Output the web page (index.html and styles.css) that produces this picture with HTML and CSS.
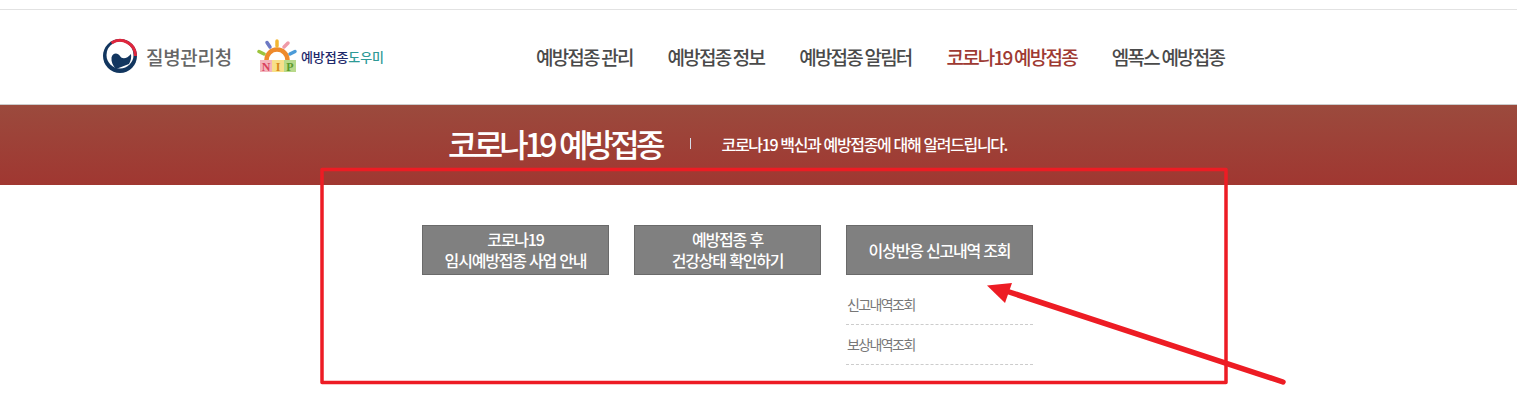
FILE: index.html
```html
<!DOCTYPE html>
<html lang="ko">

<head>
    <meta charset="UTF-8">
    <meta name="viewport" content="width=device-width, initial-scale=1.0">
    <title>코로나19 예방접종</title>
    <link rel="stylesheet" href="styles.css">
</head>

<body>
    <div class="top-line"></div>

    <header class="header">
        <div class="logos">
            <a class="logo-kdca" href="#">
                <svg class="emblem" viewBox="0 0 36 36" width="36" height="36">
                    <circle cx="18" cy="18" r="17" fill="#12365f"/>
                    <circle cx="18" cy="17" r="13.500" fill="#fff"/>
                    <path class="emblem-red" d="M9.500 5 A15.500 15.500 0 0 1 33.500 18"/>
                    <path d="M9.500 19.500 C10.500 14.500 16 14.500 18 18 C20 21.500 25 21 29 16 C29.500 19 29 23 27 26 L14 31 C11 28 9 24 9.500 19.500 Z" fill="#12365f"/>
                </svg>
                <span class="kdca-name">질병관리청</span>
            </a>
            <a class="logo-nip" href="#">
                <svg class="nip-mark" viewBox="0 0 42 34" width="42" height="34">
                    <path class="nip-arch" d="M9.500 21 A10.500 10.500 0 0 1 30.500 21"/>
                    <path class="nip-ray" d="M20 2 L20 7" stroke="#f2b632"/>
                    <path class="nip-ray" d="M10 3.500 L13 8" stroke="#6d79c4"/>
                    <path class="nip-ray" d="M31 4 L27 8" stroke="#ef9aa8"/>
                    <path class="nip-ray" d="M2 12.500 L7 15" stroke="#9cc43e"/>
                    <path class="nip-ray" d="M38 12.500 L33 15" stroke="#4c9bd8"/>
                    <rect x="3" y="21" width="12" height="12" fill="#f3b5bd"/>
                    <rect x="15" y="21" width="12" height="12" fill="#f7e08a"/>
                    <rect x="27" y="21" width="12" height="12" fill="#b8d98a"/>
                    <text class="nip-letter" x="9" y="31.500" fill="#d9405c">N</text>
                    <text class="nip-letter" x="21" y="31.500" fill="#d98a1a">I</text>
                    <text class="nip-letter" x="33" y="31.500" fill="#5b9a2c">P</text>
                </svg>
                <span class="nip-name">예방접종<em>도우미</em></span>
            </a>
        </div>
        <nav class="gnb">
            <a href="#">예방접종 관리</a>
            <a href="#">예방접종 정보</a>
            <a href="#">예방접종 알림터</a>
            <a class="on" href="#">코로나19 예방접종</a>
            <a href="#">엠폭스 예방접종</a>
        </nav>
    </header>

    <section class="banner">
        <h1>코로나19 예방접종</h1>
        <span class="banner-bar"></span>
        <p>코로나19 백신과 예방접종에 대해 알려드립니다.</p>
    </section>

    <main class="content">
        <div class="menu-col">
            <a class="menu-btn" href="#">코로나19<br>임시예방접종 사업 안내</a>
        </div>
        <div class="menu-col">
            <a class="menu-btn" href="#">예방접종 후<br>건강상태 확인하기</a>
        </div>
        <div class="menu-col">
            <a class="menu-btn" href="#">이상반응 신고내역 조회</a>
            <ul class="sub-menu">
                <li><a href="#">신고내역조회</a></li>
                <li><a href="#">보상내역조회</a></li>
            </ul>
        </div>
    </main>

    <!-- red markup drawn over the page -->
    <svg class="markup" viewBox="0 0 1517 406" width="1517" height="406">
        <rect x="322" y="169.500" width="904" height="213" fill="none" stroke="#ed1c24" stroke-width="3.500" stroke-linejoin="round"/>
        <path d="M1000 289 L1283 382" stroke="#ed1c24" stroke-width="5.500" stroke-linecap="round"/>
        <path d="M987 285.500 L1012 283 L1005 303 Z" fill="#ed1c24"/>
    </svg>
</body>

</html>
```

FILE: styles.css
```css
* {
    box-sizing: border-box;
}

body {
    margin: 0;
    font-family: "Noto Sans CJK KR", "Noto Sans", sans-serif;
    color: #444;
    background: #fff;
    overflow: hidden;
}

a {
    color: inherit;
    text-decoration: none;
}

.top-line {
    height: 10px;
    border-bottom: 1px solid #e2e2e2;
}

.header {
    display: flex;
    align-items: center;
    height: 95px;
    padding: 0 0 2px 102px;
    border-bottom: 1px solid #ccc;
}

.logos {
    display: flex;
    align-items: center;
    gap: 25px;
    width: 434px;
}

.logo-kdca,
.logo-nip {
    display: flex;
    align-items: center;
}

.emblem {
    margin-right: 8px;
}

.emblem-red {
    fill: none;
    stroke: #e0263c;
    stroke-width: 3;
}

.kdca-name {
    font-size: 19px;
    font-weight: 500;
    color: #666;
    letter-spacing: -0.3px;
}

.nip-mark {
    margin-right: 2px;
}

.nip-arch {
    fill: none;
    stroke: #ee8a2c;
    stroke-width: 4.500;
}

.nip-ray {
    fill: none;
    stroke-width: 3.500;
    stroke-linecap: round;
}

.nip-letter {
    font-family: "Liberation Serif", serif;
    font-size: 12px;
    font-weight: bold;
    text-anchor: middle;
}

.nip-name {
    font-size: 13px;
    font-weight: 500;
    color: #1f2a6b;
    letter-spacing: -0.1px;
}

.nip-name em {
    font-style: normal;
    color: #2e9a96;
}

.gnb {
    display: flex;
    gap: 35px;
}

.gnb a {
    font-size: 19px;
    font-weight: 500;
    letter-spacing: -1.8px;
    word-spacing: -1px;
    color: #4a4a4a;
}

.gnb a.on {
    color: #9e3a32;
}

.banner {
    display: flex;
    align-items: center;
    height: 80px;
    padding: 0 0 4px 448px;
    color: #fff;
    background: linear-gradient(#9b4a3d, #a03731);
}

.banner h1 {
    margin: 0;
    font-size: 32px;
    font-weight: 500;
    letter-spacing: -3.8px;
}

.banner-bar {
    width: 1px;
    height: 11px;
    margin: 0 31px 0 28px;
    background: #d5dce8;
}

.banner p {
    margin: 2px 0 0;
    font-size: 16px;
    font-weight: 500;
    letter-spacing: -1.35px;
}

.content {
    display: flex;
    gap: 25px;
    padding: 40px 0 0 422px;
}

.menu-col {
    width: 187px;
}

.menu-btn {
    display: flex;
    align-items: center;
    justify-content: center;
    height: 50px;
    border: 1px solid #6a6a6a;
    background: #808080;
    color: #fff;
    font-size: 16px;
    font-weight: 500;
    line-height: 21px;
    letter-spacing: -1.2px;
    text-align: center;
}

.sub-menu {
    margin: 10px 0 0;
    padding: 0;
    list-style: none;
}

.sub-menu li {
    height: 40px;
    padding: 9px 0 0 1px;
    border-bottom: 1px dashed #ccc;
    font-size: 14px;
    line-height: 20px;
    letter-spacing: -1.6px;
    color: #777;
}

.markup {
    position: absolute;
    top: 0;
    left: 0;
    pointer-events: none;
}
```
